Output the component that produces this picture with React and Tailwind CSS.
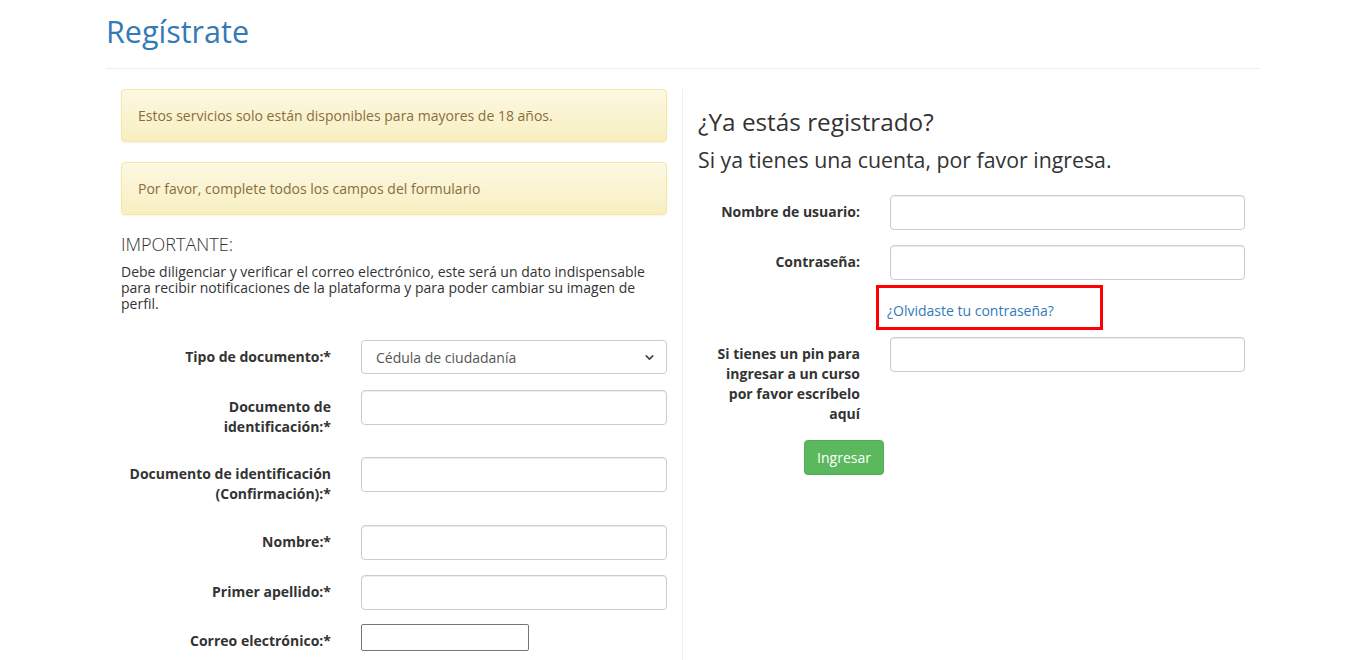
import { ChevronDown } from 'lucide-react';

function Campo({ label, children, mb = 'mb-[15px]' }) {
  return (
    <div className={'flex items-start ' + mb}>
      <label className="w-[210px] shrink-0 text-right font-bold text-[14px] leading-[20px] pt-[7px] mb-[5px] text-[#333]">
        {label}
      </label>
      <div className="ml-[30px] flex-1">{children}</div>
    </div>
  );
}

function CampoDer({ label, children }) {
  return (
    <div className="flex items-start mb-[15px]">
      <label className="w-[162px] shrink-0 text-right font-bold text-[14px] leading-[20px] pt-[7px] mb-[5px] text-[#333]">
        {label}
      </label>
      <div className="ml-[30px] w-[355px]">{children}</div>
    </div>
  );
}

const inputCls = 'block w-full h-[35px] px-[12px] border border-[#ccc] rounded-[4px] shadow-[inset_0_1px_1px_rgba(0,0,0,0.075)] bg-white text-[#555] outline-none';
const alertCls = 'rounded-[4px] border border-[#f5e79e] bg-gradient-to-b from-[#fcf8e3] to-[#f8efc0] text-[#8a6d3b] px-[16px] pt-[16px] pb-[15px] leading-[20px] shadow-[0_1px_0_rgba(255,255,255,0.25)_inset,0_1px_2px_rgba(0,0,0,0.05)]';

export default function App() {
  return (
    <div className="min-h-[660px] bg-white text-[#333] font-['Open_Sans',sans-serif] text-[14px]">
      <div className="w-[1154px] ml-[106px]">
        <div className="pt-[15px] pb-[20px] border-b border-[#eee]">
          <h1 className="text-[30.5px] leading-[33px] text-[#337ab7]">Regístrate</h1>
        </div>

        <div className="grid grid-cols-[576px_578px] mt-[20px]">
          {/* columna izquierda */}
          <div className="px-[15px]">
            <div className={alertCls + ' mb-[20px]'}>
              Estos servicios solo están disponibles para mayores de 18 años.
            </div>
            <div className={alertCls}>
              Por favor, complete todos los campos del formulario
            </div>

            <h4 className="mt-[19px] text-[18px] leading-[20px] font-light">IMPORTANTE:</h4>
            <p className="mt-[10px] leading-[16px]">
              Debe diligenciar y verificar el correo electrónico, este será un dato indispensable para recibir notificaciones de la plataforma y para poder cambiar su imagen de perfil.
            </p>

            <div className="mt-[28px]">
              <Campo label="Tipo de documento:*">
                <div className="flex items-center justify-between h-[34px] mb-[1px] border border-[#ccc] rounded-[4px] px-[14px] text-[#555] bg-white">
                  <span>Cédula de ciudadanía</span>
                  <ChevronDown size={13} strokeWidth={3} className="text-[#444] -mr-[4px]" />
                </div>
              </Campo>
              <Campo label={<>Documento de<br />identificación:*</>}>
                <input type="text" className={inputCls} />
              </Campo>
              <Campo label={<>Documento de identificación<br />(Confirmación):*</>} mb="mb-[16px]">
                <input type="text" className={inputCls} />
              </Campo>
              <Campo label="Nombre:*">
                <input type="text" className={inputCls} />
              </Campo>
              <Campo label="Primer apellido:*" mb="mb-[14px]">
                <input type="text" className={inputCls} />
              </Campo>
              <Campo label="Correo electrónico:*">
                <input type="email" className="block w-[168px] h-[27px] px-[2px] border border-[#767676] rounded-[2px] bg-white outline-none" />
              </Campo>
            </div>
          </div>

          {/* columna derecha */}
          <div className="px-[15px] border-l border-[#eee] min-h-[571px]">
            <h3 className="mt-[19px] text-[24.3px] leading-[27px]">¿Ya estás registrado?</h3>
            <h4 className="mt-[13px] text-[21.3px] leading-[23px]">Si ya tienes una cuenta, por favor ingresa.</h4>

            <div className="mt-[24px]">
              <CampoDer label="Nombre de usuario:">
                <input type="text" className={inputCls} />
              </CampoDer>
              <div className="flex items-start">
                <label className="w-[162px] shrink-0 text-right font-bold leading-[20px] pt-[7px] mb-[5px]">Contraseña:</label>
                <div className="ml-[30px] w-[355px]">
                  <input type="password" className={inputCls} />
                </div>
              </div>

              <div className="ml-[178px] mt-[5px] w-[227px] h-[45px] border-[3px] border-[#ff0000] pl-[8px] pt-[13px] leading-[20px]">
                <a href="#" className="text-[#337ab7]">¿Olvidaste tu contraseña?</a>
              </div>

              <div className="flex items-start mt-[7px]">
                <label className="w-[162px] shrink-0 text-right font-bold leading-[20px] pt-[7px]">
                  Si tienes un pin para<br />ingresar a un curso<br />por favor escríbelo<br />aquí
                </label>
                <div className="ml-[30px] w-[355px]">
                  <input type="text" className={inputCls} />
                </div>
              </div>

              <div className="mt-[16px] ml-[106px]">
                <button className="w-[80px] h-[35px] rounded-[4px] bg-[#5cb85c] border border-[#4cae4c] text-white leading-[20px]">
                  Ingresar
                </button>
              </div>
            </div>
          </div>
        </div>
      </div>
    </div>
  );
}
